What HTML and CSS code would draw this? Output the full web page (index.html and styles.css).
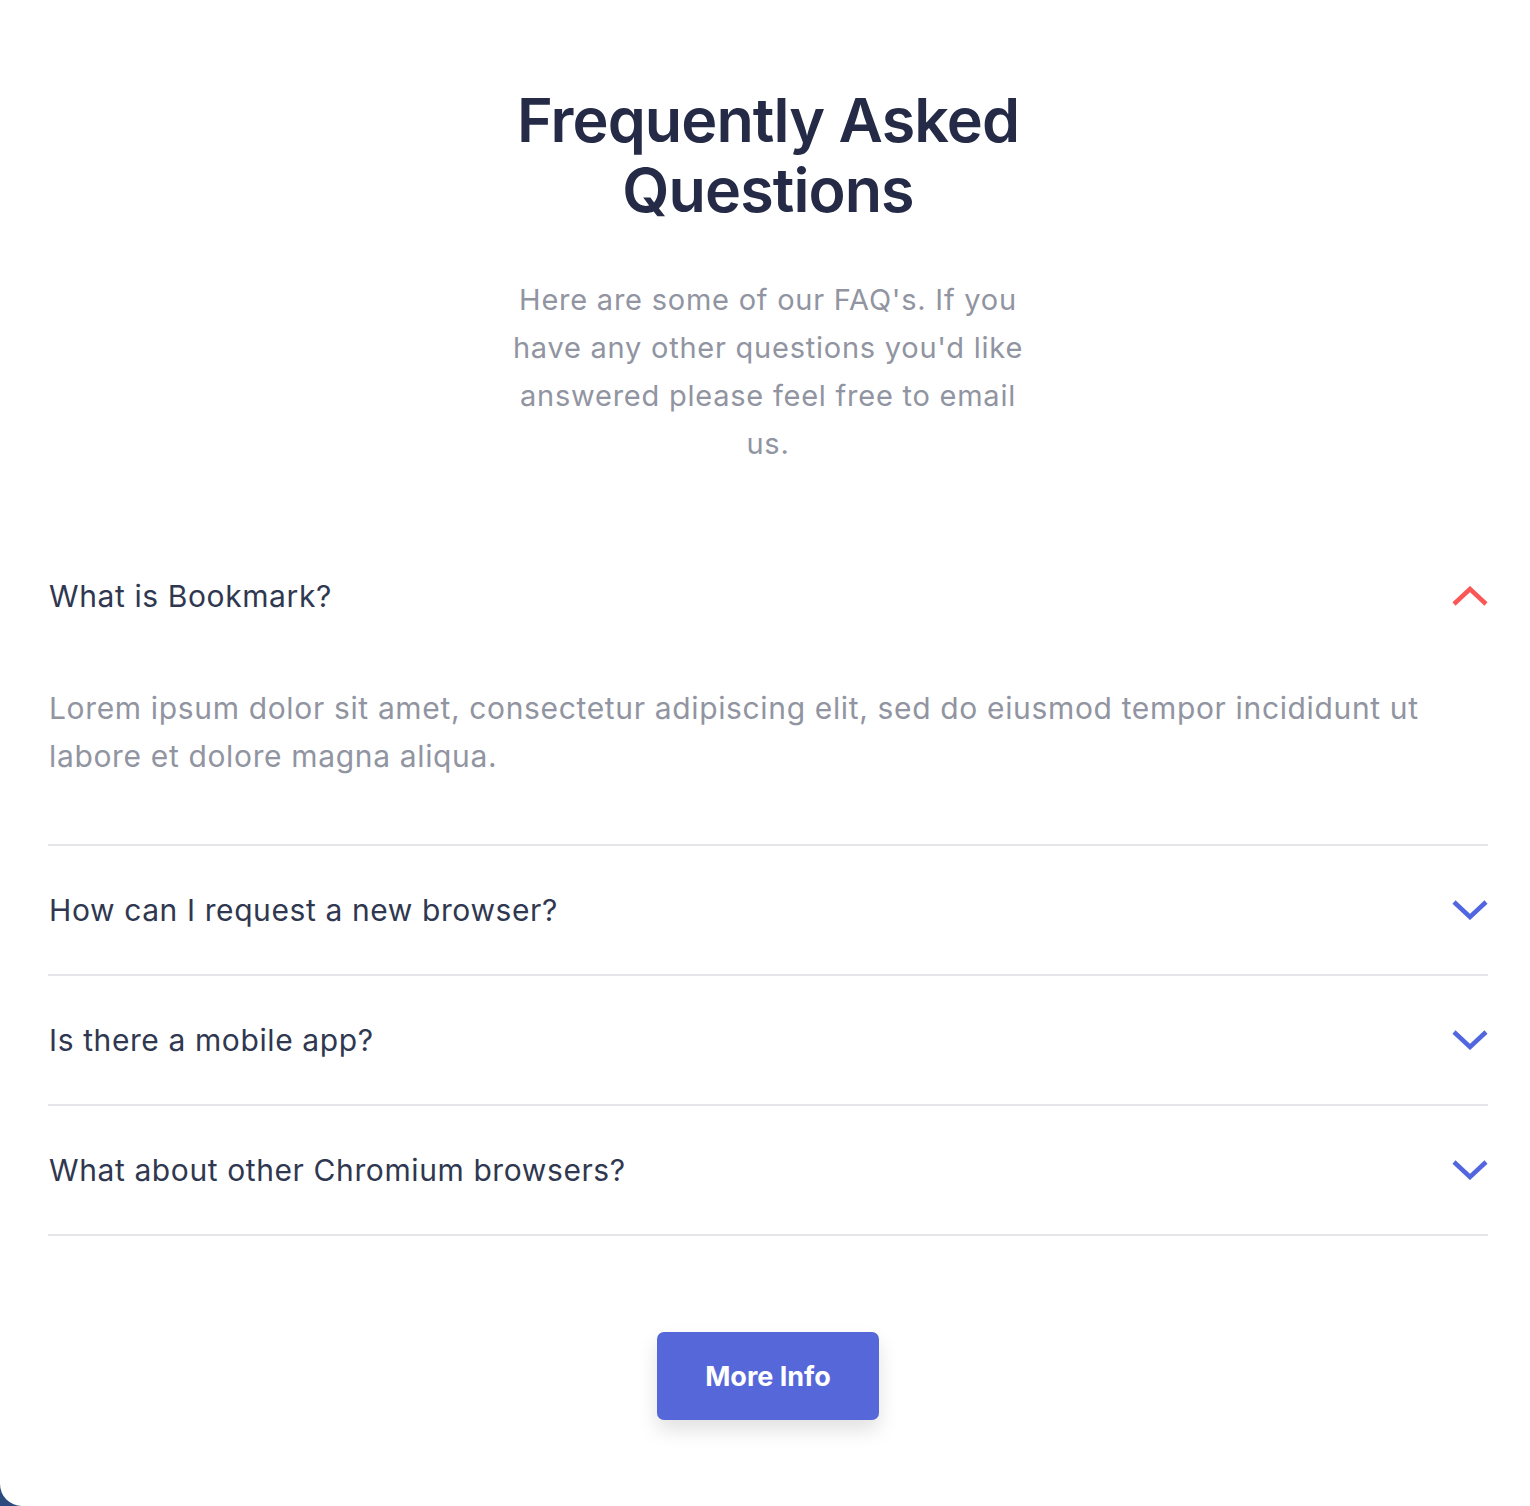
FILE: index.html
```html
<!DOCTYPE html>
<html lang="en">
<head>
<meta charset="utf-8">
<title>FAQ</title>
<link rel="stylesheet" href="styles.css">
</head>
<body>
<div class="page">
  <section class="faq">
    <h1 class="faq-title">Frequently Asked Questions</h1>
    <p class="faq-intro">Here are some of our FAQ's. If you have any other questions you'd like answered please feel free to email us.</p>
    <div class="faq-list">
      <div class="faq-item open">
        <div class="faq-q">
          <span>What is Bookmark?</span>
          <svg class="chev up" viewBox="0 0 36 20" width="36" height="20"><path d="M2 18 L18 3 L34 18" fill="none" stroke="#fa5757" stroke-width="4.5"/></svg>
        </div>
        <p class="faq-a">Lorem ipsum dolor sit amet, consectetur adipiscing elit, sed do eiusmod tempor incididunt ut labore et dolore magna aliqua.</p>
      </div>
      <div class="faq-item">
        <div class="faq-q">
          <span>How can I request a new browser?</span>
          <svg class="chev" viewBox="0 0 36 20" width="36" height="20"><path d="M2 2 L18 17 L34 2" fill="none" stroke="#5267df" stroke-width="4.5"/></svg>
        </div>
      </div>
      <div class="faq-item">
        <div class="faq-q">
          <span>Is there a mobile app?</span>
          <svg class="chev" viewBox="0 0 36 20" width="36" height="20"><path d="M2 2 L18 17 L34 2" fill="none" stroke="#5267df" stroke-width="4.5"/></svg>
        </div>
      </div>
      <div class="faq-item">
        <div class="faq-q">
          <span>What about other Chromium browsers?</span>
          <svg class="chev" viewBox="0 0 36 20" width="36" height="20"><path d="M2 2 L18 17 L34 2" fill="none" stroke="#5267df" stroke-width="4.5"/></svg>
        </div>
      </div>
    </div>
    <button class="btn">More Info</button>
  </section>
</div>
</body>
</html>
```
FILE: styles.css
```css
html, body {
  margin: 0;
  padding: 0;
  background: #2b4a7e;
}
body {
  font-family: Inter, "Noto Sans", sans-serif;
  min-height: 1506px;
}
.page {
  background: #fff;
  min-height: 1506px;
  border-bottom-left-radius: 22px;
  box-sizing: border-box;
  padding: 85px 42px 0 48px;
}
.faq {
  display: flex;
  flex-direction: column;
  align-items: center;
}
.faq-title {
  margin: 0;
  width: 560px;
  text-align: center;
  font-size: 61px;
  line-height: 70px;
  font-weight: 600;
  color: #252b46;
  letter-spacing: -0.9px;
}
.faq-intro {
  margin: 51px 0 0;
  width: 526px;
  text-align: center;
  font-size: 29px;
  line-height: 48px;
  letter-spacing: 0.76px;
  color: #9194a1;
}
.faq-list {
  width: 100%;
  margin-top: 63px;
}
.faq-item {
  border-bottom: 2px solid #e6e6ea;
}
.faq-q {
  height: 128px;
  display: flex;
  align-items: center;
  justify-content: space-between;
  font-size: 30px;
  letter-spacing: 0.6px;
  color: #2f3850;
  padding-left: 1px;
}
.faq-item.open .faq-q {
  height: 129px;
}
.faq-a {
  margin: 0;
  padding: 24px 0 64px 1px;
  font-size: 30px;
  line-height: 48px;
  letter-spacing: 0.65px;
  color: #9194a1;
}
.chev {
  display: block;
}
.btn {
  margin-top: 96px;
  width: 222px;
  height: 88px;
  border: 0;
  border-radius: 7px;
  background: #5668d9;
  color: #fff;
  font-family: inherit;
  font-size: 27px;
  font-weight: 700;
  box-shadow: 0 10px 20px rgba(0, 0, 0, 0.12);
}
```
